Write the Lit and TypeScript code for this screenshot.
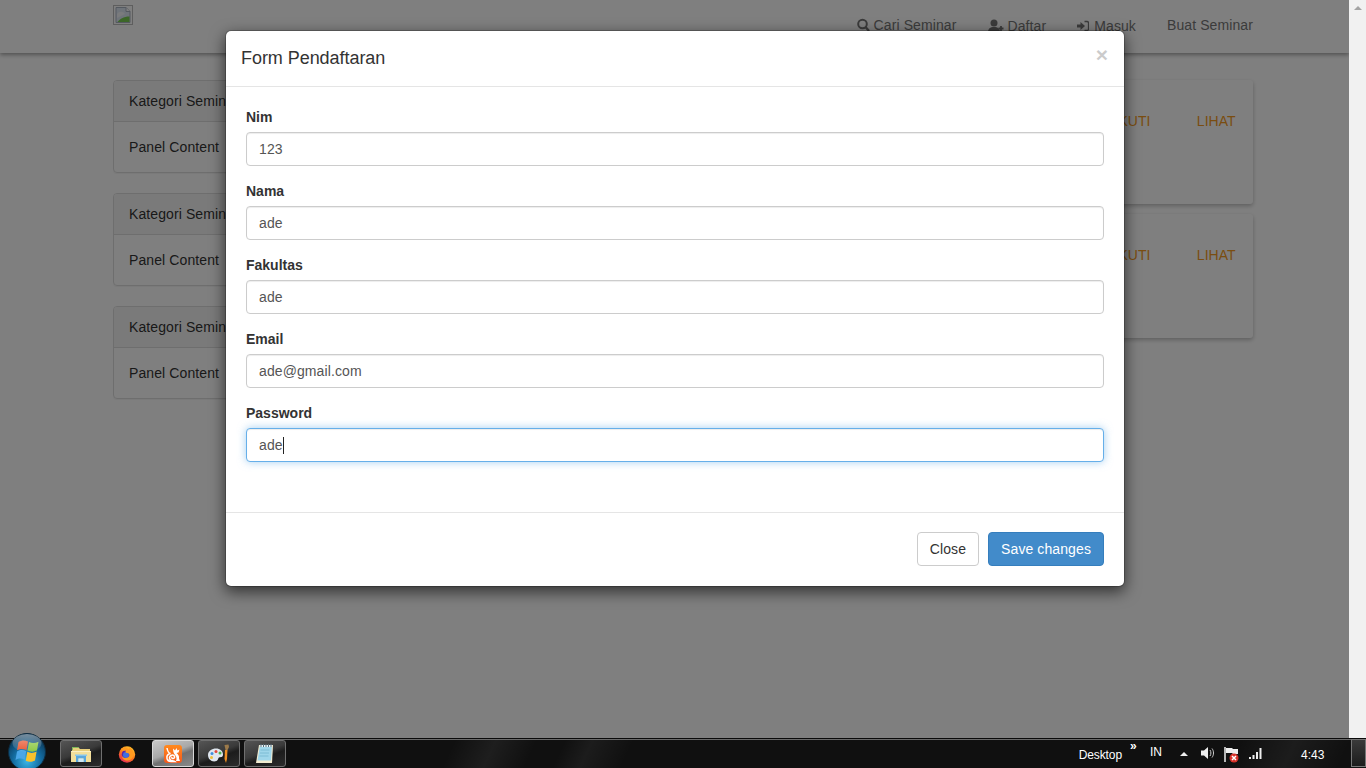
import { LitElement, html, css, svg } from "lit";
import { customElement } from "lit/decorators.js";

const fields = [
  { label: "Nim", value: "123" },
  { label: "Nama", value: "ade" },
  { label: "Fakultas", value: "ade" },
  { label: "Email", value: "ade@gmail.com" },
  { label: "Password", value: "ade", focus: true },
];

const folderIcon = svg`<svg width="22" height="20" viewBox="0 0 22 20"><path d="M2 3h6l2 2h10v12H2z" fill="#e8cf7a"/><path d="M2 3h6l1 1H3v2H2z" fill="#7fb85a"/><path d="M1 7h20v11H1z" fill="#f3df9a"/><path d="M1 7h20v1H1z" fill="#fbf0c4"/><path d="M6 11h10v7h-2.500v-3.500h-5V18H6z" fill="#5ba8dc"/><path d="M5 10.500h12V12H5z" fill="#86c6ee"/><path d="M8.500 14.500h5V18h-5z" fill="#cfe8f7"/></svg>`;
const firefoxIcon = svg`<svg width="18" height="18" viewBox="0 0 18 18"><defs><linearGradient id="ff" x1="0.8" y1="0" x2="0.2" y2="1"><stop offset="0" stop-color="#ffcb2e"/><stop offset="0.5" stop-color="#ff7a1a"/><stop offset="1" stop-color="#e0225c"/></linearGradient></defs><circle cx="9" cy="9.500" r="8.200" fill="url(#ff)"/><circle cx="8.500" cy="9.500" r="4.800" fill="#5a2aa8"/><circle cx="8" cy="10" r="3" fill="#3f6fe0"/><path d="M3 4c1 2 3 2 5 1.500-1 1.500-.5 2.500 1 2.500 2.500 0 3 2.500 1.500 4-1.500 1.500-5 1.500-6.500-1 0 3 3 5 6 4.500 3-.5 5.500-3 5.500-6.500 0-3-2-6-5-7.500 1 1.500 1 2.500.5 3C10 3 8 3 6.500 2.500 5 2.500 3.500 3 3 4z" fill="#ff9a1f"/></svg>`;
const ucIcon = svg`<svg width="20" height="20" viewBox="0 0 20 20"><defs><linearGradient id="uc" x1="0" y1="0" x2="0" y2="1"><stop offset="0" stop-color="#ff8a1e"/><stop offset="1" stop-color="#f4581c"/></linearGradient></defs><rect x="1" y="1" width="18" height="18" rx="3" fill="url(#uc)"/><path d="M4 4c.5 3 1 5 3.500 5.500C5 10 3.500 12 4 14.500c.5 2 2 3 4 3h4c-1-1-3-.6-4.300-1.300C6 15 6 12.500 8 11.500c1.500-.7 3-.5 3.500 1 .4 1.300-.6 2.300-1.800 2-.8-.2-1.100-.9-.7-1.500" fill="none" stroke="#fff" stroke-width="1.500"/><path d="M10 4.500l2 2 1.500-2.500 1 2.500 2-1-1 3-2 .5c1.500 1 3 3 2.500 5.500l1 2.500h-4c1-2 .5-4.500-1-6C10.500 9 10 7 10 4.500z" fill="#fff"/></svg>`;
const paintIcon = svg`<svg width="26" height="24" viewBox="0 0 26 24"><path d="M2 13c0-4 4-6.500 8-6.500s7 2.500 7 6c0 3-2.500 2.500-4 3-1 .4-.5 2.500-2.500 3.500C6 20.500 2 17.500 2 13z" fill="#dfe6ee"/><circle cx="6" cy="11.500" r="1.500" fill="#3f8fdc"/><circle cx="10" cy="9.500" r="1.500" fill="#e2483d"/><circle cx="14" cy="11" r="1.500" fill="#4fb24f"/><circle cx="5.500" cy="15.500" r="1.500" fill="#f0c03a"/><path d="M19 8l2.500 0-.5 9-1 4-1.500-4z" fill="#ef8f22"/><path d="M18.500 3l4-.5.5 2.500-1.500 3h-2z" fill="#9c7a4a"/></svg>`;
const notepadIcon = svg`<svg width="22" height="24" viewBox="0 0 22 24"><path d="M5 3h14l-1 18H2z" fill="#f3ecd0"/><path d="M6 3h12l-1 15.500H3.500z" fill="#9fd6ea"/><path d="M6 3h12v2H6z" fill="#e9f4f8"/><path d="M7 2v3M9.500 2v3M12 2v3M14.500 2v3M17 2v3" stroke="#5a6f7a" stroke-width="1"/><path d="M6.500 8h9M6 11h9M5.500 14h9" stroke="#7dbcd4" stroke-width="1"/></svg>`;

@customElement("app-root")
export class AppRoot extends LitElement {
  static styles = css`
    :host {
      display: block;
      width: 1366px;
      height: 768px;
      overflow: hidden;
      font-family: "Liberation Sans", Arial, sans-serif;
      font-size: 14px;
      line-height: 20px;
      color: #333;
      background: #fff;
    }
    * { box-sizing: border-box; }
    .stage { display: flex; height: 738px; }
    .page { position: relative; width: 1349px; height: 738px; overflow: hidden; letter-spacing: 0.1px; }
    .scrollbar { width: 17px; background: #f1f1f1; display: flex; justify-content: center; padding-top: 6px; }
    .scroll-up { width: 0; height: 0; border-left: 4px solid transparent; border-right: 4px solid transparent; border-bottom: 4px solid #a3a3a3; }

    .navbar {
      height: 53px;
      background: #fff;
      box-shadow: 0 2px 4px rgba(0, 0, 0, 0.35);
      display: flex;
      justify-content: space-between;
      padding: 0 96px 0 113px;
    }
    .broken { margin-top: 5px; width: 20px; height: 20px; display: block; }
    .nav-links { display: flex; gap: 31px; padding-top: 15px; color: #777; }
    .nav-link { display: flex; align-items: center; height: 20px; white-space: nowrap; }
    .nav-link svg { display: block; margin-right: 4px; }
    .nav-link svg.wide { margin-right: 5px; }
    .low { margin-top: 1px; }

    .main { display: flex; gap: 15px; padding: 27px 96px 0 113px; }
    .left { width: 270px; flex: none; display: flex; flex-direction: column; gap: 20px; }
    .panel { border: 1px solid #ddd; border-radius: 4px; box-shadow: 0 1px 1px rgba(0, 0, 0, 0.05); }
    .panel-head { background: #f5f5f5; border-bottom: 1px solid #ddd; padding: 10px 15px; border-radius: 3px 3px 0 0; }
    .panel-body { padding: 15px; }
    .right { flex: 1; display: flex; flex-direction: column; gap: 10.5px; }
    .card {
      height: 123.5px;
      border-radius: 3px;
      background: #fff;
      box-shadow: 0 2px 4px rgba(0, 0, 0, 0.25);
      padding: 31px 17.5px 0 0;
      display: flex;
      justify-content: flex-end;
      gap: 46.5px;
      color: #f59a23;
      letter-spacing: 0;
    }

    .backdrop {
      position: absolute;
      inset: 0;
      background: rgba(0, 0, 0, 0.5);
      padding: 30px 0 0 225px;
    }
    .modal {
      width: 900px;
      background: #fff;
      background-clip: padding-box;
      border: 1px solid rgba(0, 0, 0, 0.2);
      border-radius: 6px;
      box-shadow: 0 5px 15px rgba(0, 0, 0, 0.6);
    }
    .modal-head {
      display: flex;
      justify-content: space-between;
      align-items: flex-start;
      padding: 15px;
      border-bottom: 1px solid #e5e5e5;
    }
    .title { font-size: 18px; line-height: 25px; font-weight: 400; margin: 0; letter-spacing: -0.05px; }
    .close-x { font-size: 21px; line-height: 21px; font-weight: 700; color: #000; opacity: 0.2; margin-right: 1px; margin-top: -2px; }
    .modal-body { padding: 20px 20px 50px; }
    .group { margin-bottom: 15px; }
    .group:last-child { margin-bottom: 0; }
    .label { display: block; font-weight: 700; margin-bottom: 5px; letter-spacing: 0; }
    .input {
      height: 34px;
      padding: 6px 12px;
      border: 1px solid #ccc;
      border-radius: 4px;
      color: #555;
      box-shadow: inset 0 1px 1px rgba(0, 0, 0, 0.075);
      background: #fff;
    }
    .input.focus {
      border-color: #66afe9;
      box-shadow: inset 0 1px 1px rgba(0, 0, 0, 0.075), 0 0 8px rgba(102, 175, 233, 0.6);
    }
    .caret { display: inline-block; width: 1px; height: 17px; background: #222; vertical-align: -4px; }
    .modal-foot {
      display: flex;
      justify-content: flex-end;
      gap: 9px;
      padding: 19px 20px 20px;
      border-top: 1px solid #e5e5e5;
    }
    .btn {
      height: 34px;
      padding: 6px 12px;
      border: 1px solid #ccc;
      border-radius: 4px;
      background: #fff;
      color: #333;
      font: inherit;
      letter-spacing: inherit;
    }
    .btn.primary { background: #428bca; border-color: #357ebd; color: #fff; }

    .taskbar {
      position: relative;
      height: 30px;
      display: flex;
      align-items: flex-start;
      padding-left: 60px;
      gap: 4px;
      border-top: 1px solid #0a0a0a;
      color: #fff;
      font-size: 12px;
      background:
        linear-gradient(180deg, #6a6a6a 0, #6a6a6a 1px, transparent 1px),
        linear-gradient(115deg, transparent 33%, rgba(255, 255, 255, 0.06) 36%, transparent 39%, transparent 41%, rgba(255, 255, 255, 0.05) 43%, transparent 46%, transparent 90%, rgba(255, 255, 255, 0.05) 94%, transparent 98%),
        #101010;
    }
    .orb { position: absolute; left: 8px; top: -6px; display: block; }
    .task {
      margin-top: 1px;
      width: 42px;
      height: 27px;
      border-radius: 3px;
      border: 1px solid #6f6f6f;
      background: linear-gradient(160deg, #555 0%, #3a3a3a 45%, #1c1c1c 60%, #2c2c2c 100%);
      display: flex;
      align-items: center;
      justify-content: center;
    }
    .task.plain { border-color: transparent; background: none; }
    .task.active { border-color: #d8d8d8; background: linear-gradient(160deg, #c8c8c8 0%, #a8a8a8 45%, #707070 60%, #8a8a8a 100%); }
    .tray { margin-left: auto; display: flex; align-items: flex-start; height: 29px; white-space: nowrap; }
    .t-desktop { margin-top: 6px; letter-spacing: -0.1px; }
    .t-more { margin: 0 0 0 8px; font-size: 12px; line-height: 14px; font-weight: 700; width: 20px; }
    .t-lang { margin-top: 3px; width: 30px; }
    .t-up { margin-top: 13px; width: 0; height: 0; border-left: 4px solid transparent; border-right: 4px solid transparent; border-bottom: 4px solid #eee; margin-right: 13px; }
    .tray svg { display: block; margin-top: 7px; }
    .t-speaker { margin-right: 9px; }
    .t-flag { margin-right: 9px; }
    .t-clock { margin: 6px 0 0 38px; width: 21px; }
    .t-desk-btn {
      margin: 0 0 0 29px;
      width: 15px;
      height: 28px;
      border: 1px solid #777;
      background: linear-gradient(180deg, #3a3a3a, #1c1c1c);
    }
  `;

  render() {
    return html`
      <div class="stage">
        <div class="page">
          <header class="navbar">
            <svg class="broken" viewBox="0 0 20 20">
              <rect x="0.500" y="0.500" width="19" height="19" fill="#fff" stroke="#bcbcbc"/>
              <path d="M3 2.500h10l4 4v11H3z" fill="#dfe8f4" stroke="#a9b2c0"/>
              <path d="M4 9c2-3 6-3 8 0l-8 4z" fill="#f4f7fb"/>
              <path d="M4.500 17c2-3 6-5.500 12-5.500V17z" fill="#78cf50"/>
              <path d="M13 2.500v4h4" fill="#fff" stroke="#a9b2c0"/>
            </svg>
            <nav class="nav-links">
              <span class="nav-link">
                <svg width="13" height="14" viewBox="0 0 13 14"><circle cx="5.500" cy="6" r="4.300" fill="none" stroke="currentColor" stroke-width="2"/><path d="M8.500 9l3.500 4" stroke="currentColor" stroke-width="2.400"/></svg>
                Cari Seminar
              </span>
              <span class="nav-link low">
                <svg width="16" height="14" viewBox="0 0 16 14"><circle cx="6" cy="4" r="3.500" fill="currentColor"/><path d="M0 13.500c0-4 2-5.500 6-5.500s6 1.500 6 5.500z" fill="currentColor"/><path d="M10.500 9.500h5M13 7v5" stroke="currentColor" stroke-width="1.800"/></svg>
                Daftar
              </span>
              <span class="nav-link low">
                <svg class="wide" width="12" height="12" viewBox="0 0 12 12"><path d="M0 4.500h3.500V2L8 6l-4.500 4V7.500H0z" fill="currentColor"/><path d="M7.500 1.500H10c1 0 1.500.5 1.500 1.500v6c0 1-.5 1.500-1.500 1.500H7.500" fill="none" stroke="currentColor" stroke-width="1.300"/></svg>
                Masuk
              </span>
              <span class="nav-link">Buat Seminar</span>
            </nav>
          </header>
          <main class="main">
            <div class="left">
              ${[0, 1, 2].map(
                () => html`<section class="panel">
                  <div class="panel-head">Kategori Seminar</div>
                  <div class="panel-body">Panel Content</div>
                </section>`
              )}
            </div>
            <div class="right">
              ${[0, 1].map(
                () => html`<article class="card"><span>IKUTI</span><span>LIHAT</span></article>`
              )}
            </div>
          </main>
          <div class="backdrop">
            <div class="modal">
              <div class="modal-head">
                <h4 class="title">Form Pendaftaran</h4>
                <span class="close-x">×</span>
              </div>
              <div class="modal-body">
                ${fields.map(
                  (f) => html`<div class="group">
                    <span class="label">${f.label}</span>
                    <div class="input ${f.focus ? "focus" : ""}">${f.value}${f.focus ? html`<span class="caret"></span>` : ""}</div>
                  </div>`
                )}
              </div>
              <div class="modal-foot">
                <button class="btn">Close</button>
                <button class="btn primary">Save changes</button>
              </div>
            </div>
          </div>
        </div>
        <div class="scrollbar"><div class="scroll-up"></div></div>
      </div>
      <footer class="taskbar">
        <svg class="orb" width="38" height="38" viewBox="0 0 38 38">
          <defs>
            <radialGradient id="orbg" cx="0.5" cy="0.75" r="0.7"><stop offset="0" stop-color="#39b6e8"/><stop offset="0.55" stop-color="#136a9e"/><stop offset="1" stop-color="#0b3554"/></radialGradient>
            <linearGradient id="orbs" x1="0" y1="0" x2="0" y2="1"><stop offset="0" stop-color="#fff" stop-opacity="0.45"/><stop offset="1" stop-color="#fff" stop-opacity="0.03"/></linearGradient>
          </defs>
          <circle cx="19" cy="19" r="18.500" fill="url(#orbg)" stroke="#0d2c40"/>
          <path d="M10.500 9c3.500-2 6-2 9.500-.5l-1.500 8.500c-3.500-1.500-6-1.500-9.500.3z" fill="#e8552f"/>
          <path d="M21 9c3 1.500 6 1.500 9.500-.3L29 17.500c-3.500 1.500-6 1.500-9.500 0z" fill="#8ac73f"/>
          <path d="M9 18.500c3.500-1.800 6-1.800 9.200-.3l-1.500 8.500c-3.500-1.500-5.700-1.500-9.200.3z" fill="#49a6e8"/>
          <path d="M19.300 18.800c3 1.500 6 1.500 9.300-.2L27 27.500c-3.500 1.700-6 1.700-9.200.2z" fill="#f9c22c"/>
          <ellipse cx="19" cy="10" rx="14.500" ry="9" fill="url(#orbs)"/>
        </svg>
        <div class="task">${folderIcon}</div>
        <div class="task plain">${firefoxIcon}</div>
        <div class="task active">${ucIcon}</div>
        <div class="task">${paintIcon}</div>
        <div class="task">${notepadIcon}</div>
        <div class="tray">
          <span class="t-desktop">Desktop</span>
          <span class="t-more">»</span>
          <span class="t-lang">IN</span>
          <span class="t-up"></span>
          <svg class="t-speaker" width="14" height="14" viewBox="0 0 14 14"><path d="M0 4.500h3L7 1v12L3 9.500H0z" fill="#eee"/><path d="M9 4c1.200 1.800 1.200 4.200 0 6M11 2.500c2 2.700 2 6.300 0 9" fill="none" stroke="#ccc"/></svg>
          <svg class="t-flag" width="15" height="17" viewBox="0 0 15 17"><path d="M1 1v15" stroke="#eee" stroke-width="1.500"/><path d="M2 2h6l1 1h5v5H9L8 7H2z" fill="#eee"/><circle cx="10" cy="12" r="4.500" fill="#d9322a"/><path d="M8 10l4 4M12 10l-4 4" stroke="#fff" stroke-width="1.500"/></svg>
          <svg width="15" height="14" viewBox="0 0 15 14"><path d="M1 11h2v2H1zM4.500 9h2v4h-2zM8 6h2v7H8zM11.500 2h2v11h-2z" fill="#eee"/></svg>
          <span class="t-clock">4:43</span>
          <div class="t-desk-btn"></div>
        </div>
      </footer>
    `;
  }
}
